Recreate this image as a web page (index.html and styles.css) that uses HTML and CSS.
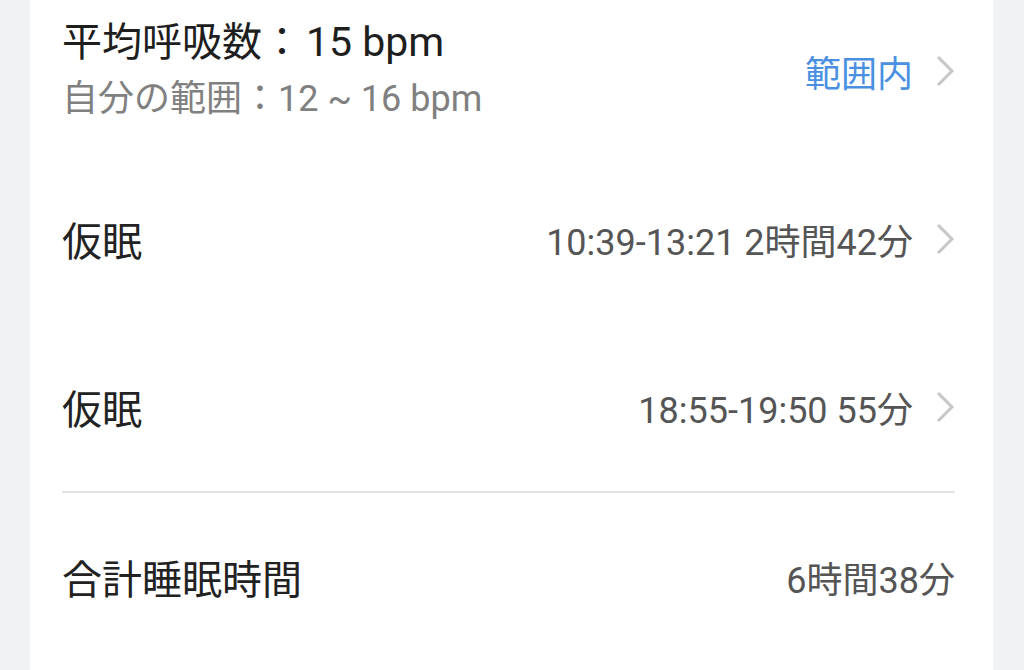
FILE: index.html
```html
<!DOCTYPE html>
<html lang="ja">
  <head>
    <meta charset="UTF-8" />
    <meta name="viewport" content="width=device-width, initial-scale=1.0" />
    <title>睡眠</title>
    <link rel="stylesheet" href="styles.css">
  </head>
  <body>
    <div class="card">
      <!-- 呼吸数 -->
      <div class="row row-first">
        <div class="label-block">
          <div class="title">平均呼吸数：<span class="num">15 bpm</span></div>
          <div class="sub">自分の範囲：12 ~ 16 bpm</div>
        </div>
        <div class="value">
          <span class="status">範囲内</span>
          <svg class="chevron" viewBox="0 0 20 32"><path d="M3 2 L17 16 L3 30" /></svg>
        </div>
      </div>

      <div class="row">
        <div class="label">仮眠</div>
        <div class="value">
          <span>10:39-13:21 2時間42分</span>
          <svg class="chevron" viewBox="0 0 20 32"><path d="M3 2 L17 16 L3 30" /></svg>
        </div>
      </div>

      <div class="row">
        <div class="label">仮眠</div>
        <div class="value">
          <span>18:55-19:50 55分</span>
          <svg class="chevron" viewBox="0 0 20 32"><path d="M3 2 L17 16 L3 30" /></svg>
        </div>
      </div>

      <div class="divider"></div>

      <div class="row">
        <div class="label">合計睡眠時間</div>
        <div class="value">
          <span>6時間38分</span>
        </div>
      </div>
    </div>
  </body>
</html>
```

FILE: styles.css
```css
body {
  margin: 0;
  background-color: #f1f2f4;
  font-family: Roboto, "Noto Sans CJK JP", sans-serif;
  color: #222;
}

.card {
  margin: 0 31px 0 30px;
  background-color: #fff;
  padding: 0 38px 0 32px;
  height: 670px;
  box-sizing: border-box;
}

.row {
  display: flex;
  align-items: center;
  justify-content: space-between;
  height: 168px;
}

/* first row is cut at the top of the screen */
.row-first {
  height: 155px;
  padding-bottom: 13px;
  box-sizing: border-box;
}

.title {
  font-size: 40px;
  line-height: 57px;
  color: #1e1e1e;
}

.title .num {
  font-size: 41px;
  margin-left: 4px;
}

.sub {
  font-size: 36px;
  line-height: 57px;
  color: #808080;
}

.label {
  font-size: 40px;
  color: #222;
}

.value {
  display: flex;
  align-items: center;
  gap: 22px;
  font-size: 36px;
  color: #555;
}

.status {
  color: #4a90e2;
}

.chevron {
  width: 20px;
  height: 32px;
  fill: none;
  stroke: #c6c6c6;
  stroke-width: 3;
}

.divider {
  height: 2px;
  background-color: #e3e3e3;
}
```
